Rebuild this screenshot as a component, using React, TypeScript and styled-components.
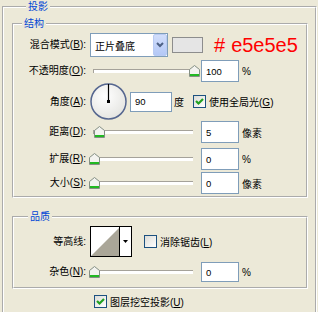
import React from 'react';
import styled, { createGlobalStyle } from 'styled-components';

const GlobalStyle = createGlobalStyle`
    html, body {
        margin: 0;
        padding: 0;
        background: #ece9d8;
    }
    body {
        width: 318px;
        height: 312px;
        overflow: hidden;
        font-family: "Liberation Sans", "Noto Sans CJK SC", sans-serif;
        font-size: 10px;
        color: #000;
    }
`;

const SDialog = styled.fieldset`
    margin: 0 1px 0 2px;
    padding: 4px 7px 0 8px;
    border: 2px groove #fff;
    border-bottom: none;
    min-width: 0;
    height: 312px;
    box-sizing: border-box;
`;

const SSection = styled.fieldset<{ $top: number; $pad: string }>`
    margin: ${({ $top }) => $top}px 0 0 0;
    padding: ${({ $pad }) => $pad};
    border: 2px groove #fff;
    min-width: 0;
`;

const SLegend = styled.legend<{ $offset: number }>`
    margin-left: ${({ $offset }) => $offset}px;
    padding: 0 2px;
    color: #0046d5;
    font-size: 10px;
    line-height: 13px;
`;

const SRow = styled.div<{ $height: number; $top?: number }>`
    display: grid;
    grid-template-columns: 72px auto;
    column-gap: 3px;
    align-items: center;
    height: ${({ $height }) => $height}px;
    margin-top: ${({ $top = 0 }) => $top}px;
`;

const SLabel = styled.label`
    justify-self: end;
    white-space: nowrap;
    line-height: 12px;
`;

const SControls = styled.div`
    display: flex;
    align-items: center;
    white-space: nowrap;
`;

const SSelect = styled.div`
    box-sizing: border-box;
    width: 78px;
    height: 24px;
    margin-left: 1px;
    display: flex;
    align-items: center;
    justify-content: space-between;
    border: 1px solid #7f9db9;
    background: #fff;
    padding-left: 4px;
`;

const SSelectButton = styled.div`
    width: 14px;
    height: 22px;
    box-sizing: border-box;
    border: 1px solid #b9cbf3;
    border-radius: 2px;
    background: linear-gradient(#d2defb, #b4c8f6);
    display: grid;
    place-items: center;
`;

const SSwatch = styled.div`
    box-sizing: border-box;
    width: 31px;
    height: 16px;
    margin-left: 4px;
    border: 1px solid #8d8d8d;
    background: #e5e5e5;
`;

const SHex = styled.span`
    margin-left: 11px;
    color: #ff0000;
    font-family: "Liberation Sans Narrow", "Liberation Sans", sans-serif;
    font-size: 20px;
    line-height: 18px;
`;

const SHash = styled.span`
    margin-right: 6px;
`;

const SSlider = styled.div`
    position: relative;
    flex: none;
    width: 110px;
    height: 12px;
`;

const STrack = styled.div`
    box-sizing: border-box;
    margin: 4px 6px 0 4px;
    height: 4px;
    border-top: 1px solid #a5a29a;
    border-left: 1px solid #a5a29a;
    background: #fff;
`;

const SThumb = styled.svg`
    position: absolute;
    top: 0;
`;

const SInput = styled.div<{ $width?: number; $height?: number }>`
    box-sizing: border-box;
    width: ${({ $width = 38 }) => $width}px;
    height: ${({ $height = 22 }) => $height}px;
    margin-left: 2px;
    border: 1px solid #7f9db9;
    background: #fff;
    padding-left: 4px;
    display: flex;
    align-items: center;
    font-size: 9.5px;
`;

const SUnit = styled.span<{ $gap?: number }>`
    margin-left: ${({ $gap = 3 }) => $gap}px;
`;

const SCheckBox = styled.span<{ $gap?: number }>`
    box-sizing: border-box;
    width: 13px;
    height: 13px;
    margin-left: ${({ $gap = 0 }) => $gap}px;
    border: 1px solid #1c5180;
    background: linear-gradient(135deg, #dcdcd7, #fff);
    display: grid;
    place-items: center;
    flex: none;
`;

const SCheckText = styled.span`
    margin-left: 3px;
`;

const SContour = styled.div`
    box-sizing: border-box;
    width: 42px;
    height: 31px;
    margin-left: 1px;
    border: 1px solid #000;
    background: #fff;
    display: flex;
`;

const SContourArrow = styled.div`
    flex: 1;
    display: grid;
    place-items: center;
`;

const SFooter = styled.div`
    display: flex;
    align-items: center;
    margin: 6px 0 0 82px;
    height: 13px;
`;

const Hot = ({ k }: { k: string }) => (
    <>
        (<u>{k}</u>)
    </>
);

const Thumb = ({ value }: { value: number }) => (
    <SThumb width="11" height="12" viewBox="0 0 11 12" style={{ left: value }}>
        <path d="M0.5 11.5 V4.5 L5.5 0.5 L10.5 4.5 V11.5 Z" fill="#f3f3ef" stroke="#848f84" />
        <rect x="1" y="9" width="9" height="2" fill="#22b822" />
    </SThumb>
);

const Slider = ({ value }: { value: number }) => (
    <SSlider>
        <STrack />
        <Thumb value={value} />
    </SSlider>
);

const Check = ({ checked, gap }: { checked?: boolean; gap?: number }) => (
    <SCheckBox $gap={gap}>
        {checked && (
            <svg width="9" height="9" viewBox="0 0 9 9">
                <path d="M1 4 L3.5 6.5 L8 2" stroke="#21a121" strokeWidth="2.2" fill="none" />
            </svg>
        )}
    </SCheckBox>
);

const Dial = () => (
    <svg width="38" height="39" viewBox="0 0 38 39" style={{ marginLeft: 1, flex: 'none' }}>
        <defs>
            <radialGradient id="dialFill" cx="40%" cy="35%" r="70%">
                <stop offset="0%" stopColor="#ffffff" />
                <stop offset="100%" stopColor="#e4e4e0" />
            </radialGradient>
        </defs>
        <circle cx="18.5" cy="19.5" r="17.5" fill="url(#dialFill)" stroke="#55668f" strokeWidth="1.5" />
        <line x1="18.5" y1="2" x2="18.5" y2="19.5" stroke="#000" strokeWidth="1.2" />
        <rect x="17" y="18" width="3" height="3" fill="#000" />
    </svg>
);

type SliderRowProps = {
    label: string;
    hot: string;
    value: number;
    unit: string;
    top?: number;
};

const SliderRow = ({ label, hot, value, unit, top }: SliderRowProps) => (
    <SRow $height={22} $top={top}>
        <SLabel>
            {label}
            <Hot k={hot} />:
        </SLabel>
        <SControls>
            <Slider value={value} />
            <SInput>{value}</SInput>
            <SUnit>{unit}</SUnit>
        </SControls>
    </SRow>
);

export default function App() {
    return (
        <>
            <GlobalStyle />
            <SDialog>
                <SLegend $offset={14}>投影</SLegend>
                <SSection $top={0} $pad="3px 0 2px 0">
                    <SLegend $offset={8}>结构</SLegend>
                    <SRow $height={24}>
                        <SLabel>
                            混合模式<Hot k="B" />:
                        </SLabel>
                        <SControls>
                            <SSelect>
                                正片叠底
                                <SSelectButton>
                                    <svg width="8" height="6" viewBox="0 0 8 6">
                                        <path d="M1 1 L4 4 L7 1" stroke="#4d6185" strokeWidth="2" fill="none" />
                                    </svg>
                                </SSelectButton>
                            </SSelect>
                            <SSwatch />
                            <SHex>
                                <SHash>#</SHash>e5e5e5
                            </SHex>
                        </SControls>
                    </SRow>
                    <SliderRow label="不透明度" hot="O" value={100} unit="%" top={3} />
                    <SRow $height={39}>
                        <SLabel>
                            角度<Hot k="A" />:
                        </SLabel>
                        <SControls>
                            <Dial />
                            <SInput $width={42} $height={20}>90</SInput>
                            <SUnit $gap={2}>度</SUnit>
                            <Check checked gap={9} />
                            <SCheckText>
                                使用全局光<Hot k="G" />
                            </SCheckText>
                        </SControls>
                    </SRow>
                    <SliderRow label="距离" hot="D" value={5} unit="像素" />
                    <SliderRow label="扩展" hot="R" value={0} unit="%" top={5} />
                    <SliderRow label="大小" hot="S" value={0} unit="像素" top={2} />
                </SSection>
                <SSection $top={12} $pad="3px 0 5px 0">
                    <SLegend $offset={14}>品质</SLegend>
                    <SRow $height={31}>
                        <SLabel>等高线:</SLabel>
                        <SControls>
                            <SContour>
                                <svg width="29" height="29" viewBox="0 0 29 29">
                                    <path d="M0 29 L29 0 V29 Z" fill="#aaa698" />
                                    <line x1="28.5" y1="0" x2="28.5" y2="29" stroke="#000" />
                                </svg>
                                <SContourArrow>
                                    <svg width="5" height="3" viewBox="0 0 5 3">
                                        <path d="M0 0 H5 L2.5 3 Z" fill="#000" />
                                    </svg>
                                </SContourArrow>
                            </SContour>
                            <Check gap={12} />
                            <SCheckText>
                                消除锯齿<Hot k="L" />
                            </SCheckText>
                        </SControls>
                    </SRow>
                    <SRow $height={20} $top={5}>
                        <SLabel>
                            杂色<Hot k="N" />:
                        </SLabel>
                        <SControls>
                            <Slider value={0} />
                            <SInput $height={20}>0</SInput>
                            <SUnit>%</SUnit>
                        </SControls>
                    </SRow>
                </SSection>
                <SFooter>
                    <Check checked />
                    <SCheckText>
                        图层挖空投影<Hot k="U" />
                    </SCheckText>
                </SFooter>
            </SDialog>
        </>
    );
}
